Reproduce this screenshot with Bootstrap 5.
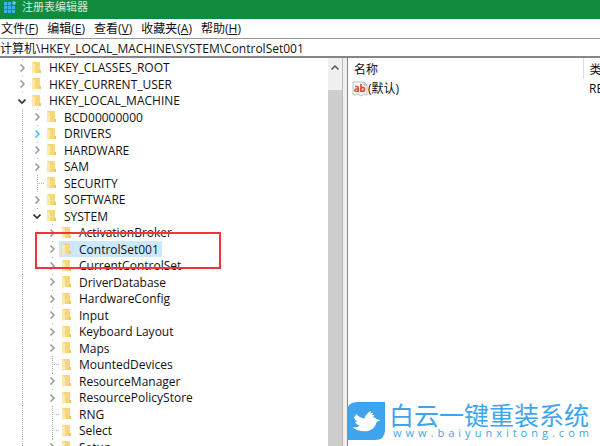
<!DOCTYPE html>
<html lang="zh-CN">
<head>
<meta charset="utf-8">
<meta name="viewport" content="width=device-width, initial-scale=1">
<title>注册表编辑器</title>
<link href="https://cdn.jsdelivr.net/npm/bootstrap@5.3.0/dist/css/bootstrap.min.css" rel="stylesheet">
<style>
body { font: 12px/16px "Open Sans", "Noto Sans CJK SC", sans-serif; color: #111; }
button { background: none; border: 0; padding: 0; color: inherit; }
.title-bar { height: 19px; background: #128a3e; color: #d3ead9; padding-left: 4px; gap: 6px; font-size: 11px; line-height: 12px; padding-bottom: 5px; }
.menu-strip { height: 20px; gap: 9px; padding: 1px 0 0 1px; border-bottom: 1px solid #999; }
.address { height: 19px; border: 0; border-bottom: 2px solid #85858c; padding: 0; outline: 0; color: inherit; }
.tree-pane { width: 58%; border-right: 1px solid #85858c; }
.tree { display: grid; grid-auto-rows: 17px 16px; padding: 1px 0 0 14px; align-content: start; }
.tree li { display: flex; align-items: stretch; line-height: 17px; white-space: nowrap; }
.rail { width: 15px; flex: none; }
.line { background: repeating-linear-gradient(#b4b4b4 0 1px, #fff 1px 2px) 8px 0 / 1px 100% no-repeat; }
.twist { width: 15px; flex: none; display: flex; align-items: center; justify-content: center; background: linear-gradient(#b4b4b4, #b4b4b4) 8px 0 / 1px 1px no-repeat; color: #999; }
.twist.open { color: #333; }
.twist.hot { color: #3cc3f4; }
.leaf { background-image: repeating-linear-gradient(#b4b4b4 0 1px, #fff 1px 2px), repeating-linear-gradient(90deg, #b4b4b4 0 1px, #fff 1px 2px); background-size: 1px 100%, 7px 1px; background-position: 8px 0, 8px 8px; background-repeat: no-repeat; }
.node { display: flex; align-items: center; gap: 7px; padding: 0 3px; }
.node[aria-selected=true] { background: #cce8ff; }
.scroll-track { width: 14px; background: #f0f0f0; padding-top: 6px; }
.scroll-track svg { margin-bottom: 18px; }
.scroll-thumb { background: #cdcdcd; }
.splitter { width: 5px; background: #f0f0f0; border-left: 1px solid #b9b9c0; }
.values { width: 100%; table-layout: fixed; white-space: nowrap; }
.values th { font-weight: 400; padding: 3px 5px 0 6px; height: 21px; }
.values th + th { border-left: 1px solid #ddd; }
.values td { padding: 2px 4px; }
.values td + td { padding-left: 6px; }
.values .kind { width: 17px; }
.marker { left: 35px; top: 174px; width: 186px; height: 37px; border: 2px solid #f2353c; pointer-events: none; }
.brand { right: 11px; bottom: 6px; gap: 4px; color: #3fa4ee; }
.brand-name { font-family: "Noto Sans CJK SC", sans-serif; font-size: 25px; line-height: 24px; }
.brand-url { font-size: 11px; line-height: 14px; padding-left: 4px; display: flex; justify-content: space-between; }
</style>
<script src="https://cdn.jsdelivr.net/npm/bootstrap@5.3.0/dist/js/bootstrap.bundle.min.js"></script>
</head>
<body class="vh-100 d-flex flex-column overflow-hidden bg-white">
<svg width="0" height="0" class="position-absolute" aria-hidden="true">
<symbol id="folder" viewBox="0 0 10 12"><path d="M0 1l1-1h7v8h1v3H0z" fill="#f8d778"/><path d="M0 1l3 1v9l-3 1z" fill="#fce9ae"/><path d="M7 8h2v3H7z" fill="#eec762"/></symbol>
<symbol id="closed" viewBox="0 0 8 8"><path d="M2.500.5L6 4 2.500 7.500" fill="none" stroke="currentColor" stroke-width="1.500"/></symbol>
<symbol id="opened" viewBox="0 0 8 8"><path d="M.5 2.500L4 6l3.500-3.500" fill="none" stroke="currentColor" stroke-width="1.700"/></symbol>
</svg>
<header class="title-bar d-flex align-items-center flex-shrink-0">
<svg width="12" height="12" viewBox="0 0 12 12" aria-hidden="true"><path d="M0 1h7v3h4v8H0z" fill="#1686b4"/><path d="M0 1h3v3H0zM4 1h3v3H4zM0 5h3v3H0zM4 5h3v3H4zM8 5h3v3H8zM0 9h3v3H0zM4 9h3v3H4zM8 9h3v3H8z" fill="#35b5e2"/><path d="M9 0l3 1-1 3-3-1z" fill="#5ccdf0"/></svg>
<span>注册表编辑器</span>
</header>
<nav class="menu-strip d-flex align-items-center flex-shrink-0" aria-label="菜单">
<button type="button">文件(<u>F</u>)</button><button type="button">编辑(<u>E</u>)</button><button type="button">查看(<u>V</u>)</button><button type="button">收藏夹(<u>A</u>)</button><button type="button">帮助(<u>H</u>)</button>
</nav>
<input class="address w-100 flex-shrink-0" type="text" aria-label="地址" value="计算机\HKEY_LOCAL_MACHINE\SYSTEM\ControlSet001">
<main class="d-flex flex-grow-1 overflow-hidden position-relative">
<section class="tree-pane d-flex flex-shrink-0 position-relative overflow-hidden">
<ul class="tree list-unstyled mb-0 flex-grow-1" role="tree" id="tree" aria-label="注册表"></ul>
<div class="scroll-track d-flex flex-column align-items-center"><svg width="8" height="8" viewBox="0 0 8 8" aria-hidden="true"><path d="M.5 5.500L4 2l3.500 3.500" fill="none" stroke="#555" stroke-width="1.500"/></svg><div class="scroll-thumb w-100 flex-grow-1"></div></div>
<div class="splitter"></div>
<div class="marker position-absolute"></div>
</section>
<section class="flex-grow-1 overflow-hidden">
<table class="values">
<thead><tr><th scope="col">名称</th><th scope="col" class="kind">类型</th></tr></thead>
<tbody><tr><td><span class="d-flex align-items-center"><svg width="16" height="16" viewBox="0 0 16 16" aria-hidden="true"><path d="M1 1h11l3 3v10l-3-1-3 2-3-2-3 1-2-1z" fill="#fafafa" stroke="#bdbdbd"/><path d="M12 1v3h3" fill="none" stroke="#aaa"/><g fill="none" stroke="#dc5136" stroke-width="1.700"><path d="M3 5.500h2q1.200 0 1.200 1.200V11M6 8H4.200Q3 8 3 9.300t1.300 1.200Q6 10.500 6.200 9M9 3v8"/><ellipse cx="10.800" cy="8.300" rx="1.700" ry="2"/></g></svg>(默认)</span></td><td>REG_SZ</td></tr></tbody>
</table>
</section>
<div class="brand position-absolute d-flex align-items-center">
<svg width="38" height="38" viewBox="0 0 38 38" aria-hidden="true"><path d="M10 0h28v28q0 10-10 10H0V10Q0 0 10 0z" fill="#3fa4ee"/><path d="M9 12q4 4 8.500 4.500Q18.500 12 24 9l-.5 2.500 3-1-1.500 2.500 2.500 0-1.500 2.200q2.200.3 3.500 1.800l4 1.200-3.200 1.300-.8 1q-1.500 6.500-8.500 8.500-8 1.500-15.500-3.500 4.500.3 7.500-2-4-.8-5-3.800h2.700q-3.500-1.700-3.900-5.200l2.200.5Q7.500 16 9 12z" fill="#fff"/></svg>
<div><div class="brand-name">白云一键重装系统</div><div class="brand-url" id="url" aria-label="www.baiyunxitong.com"></div></div>
</div>
</main>
<script>
const nodes = [
  [0, 'HKEY_CLASSES_ROOT', ''], [0, 'HKEY_CURRENT_USER', ''], [0, 'HKEY_LOCAL_MACHINE', 'open'],
  [1, 'BCD00000000', ''], [1, 'DRIVERS', 'hot'], [1, 'HARDWARE', ''], [1, 'SAM', ''], [1, 'SECURITY', 'leaf'], [1, 'SOFTWARE', ''], [1, 'SYSTEM', 'open'],
  [2, 'ActivationBroker', ''], [2, 'ControlSet001', ''], [2, 'CurrentControlSet', ''], [2, 'DriverDatabase', ''], [2, 'HardwareConfig', ''], [2, 'Input', ''],
  [2, 'Keyboard Layout', ''], [2, 'Maps', ''], [2, 'MountedDevices', 'leaf'], [2, 'ResourceManager', ''], [2, 'ResourcePolicyStore', ''], [2, 'RNG', 'leaf'], [2, 'Select', 'leaf'], [2, 'Setup', '']
];
document.getElementById('tree').innerHTML = nodes.map(([level, name, state]) => {
  const rails = level ? '<span class="rail line"></span>' + '<span class="rail"></span>'.repeat(level - 1) : '';
  const twist = state === 'leaf' ? '<span class="rail leaf"></span>'
    : `<button type="button" class="twist ${state}" aria-label="${name}"><svg width="8" height="8"><use href="#${state === 'open' ? 'opened' : 'closed'}"/></svg></button>`;
  return `<li role="none">${rails}${twist}<span class="node" role="treeitem" aria-level="${level + 1}" aria-selected="${name === 'ControlSet001'}"><svg width="10" height="12"><use href="#folder"/></svg>${name}</span></li>`;
}).join('');
document.getElementById('url').innerHTML = [...'www.baiyunxitong.com'].map(c => `<span>${c}</span>`).join('');
</script>
</body>
</html>
